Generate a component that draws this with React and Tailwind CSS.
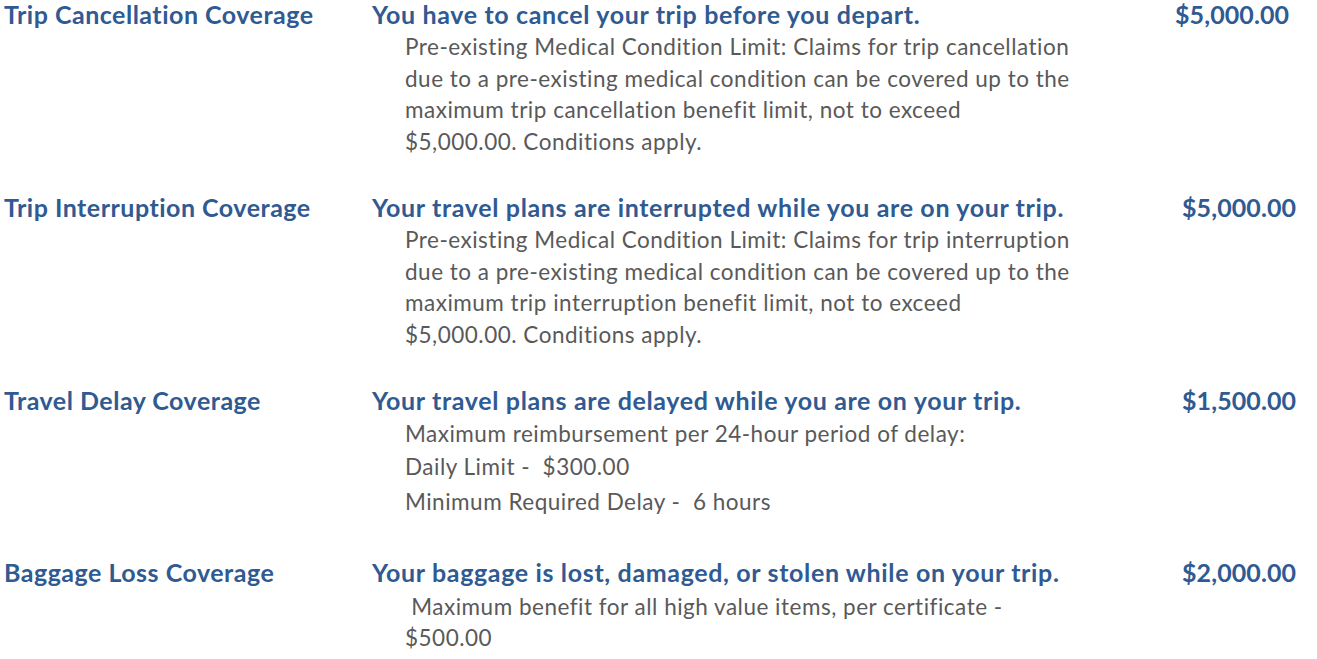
import React from "react";

const rows = [
  {
    title: "Trip Cancellation Coverage",
    lead: "You have to cancel your trip before you depart.",
    amount: "$5,000.00",
    amountPad: "pl-0",
    lines: [
      "Pre-existing Medical Condition Limit: Claims for trip cancellation",
      "due to a pre-existing medical condition can be covered up to the",
      "maximum trip cancellation benefit limit, not to exceed",
      "$5,000.00. Conditions apply.",
    ],
  },
  {
    title: "Trip Interruption Coverage",
    lead: "Your travel plans are interrupted while you are on your trip.",
    amount: "$5,000.00",
    amountPad: "pl-[7px]",
    lines: [
      "Pre-existing Medical Condition Limit: Claims for trip interruption",
      "due to a pre-existing medical condition can be covered up to the",
      "maximum trip interruption benefit limit, not to exceed",
      "$5,000.00. Conditions apply.",
    ],
  },
];

function Row({ title, lead, amount, amountPad, children }) {
  return (
    <div className="flex">
      <div className="w-[372px] shrink-0 pl-[4px] text-[25px] font-bold leading-[31px] tracking-[0.5px] text-[#2f5a92] whitespace-nowrap">
        {title}
      </div>
      <div className="w-[803px] shrink-0">
        <div className="text-[25px] font-bold leading-[31px] tracking-[0.65px] text-[#2f5a92] whitespace-nowrap">{lead}</div>
        {children}
      </div>
      <div className={`text-[25px] font-bold leading-[31px] tracking-[0.1px] text-[#2f5a92] ${amountPad}`}>{amount}</div>
    </div>
  );
}

export default function App() {
  return (
    <div className="min-h-screen bg-white font-['Lato','Liberation_Sans',sans-serif]">
      <div className="-mt-[1px] flex flex-col gap-[35px]">
        {rows.map((r, i) => (
          <Row key={i} {...r}>
            <div className="pl-[33px] pt-[1px] text-[22.5px] leading-[31.5px] tracking-[0.5px] text-[#595959]">
              {r.lines.map((l, j) => (
                <div key={j}>{l}</div>
              ))}
            </div>
          </Row>
        ))}
        <Row
          title="Travel Delay Coverage"
          lead="Your travel plans are delayed while you are on your trip."
          amount="$1,500.00"
          amountPad="pl-[7px]"
        >
          <div className="pl-[33px] text-[22.5px] tracking-[0.5px] text-[#595959]">
            <div className="mt-[2px] leading-[31px]">Maximum reimbursement per 24-hour period of delay:</div>
            <div className="mt-[2px] leading-[31px]">Daily Limit -&nbsp; $300.00</div>
            <div className="mt-[4px] leading-[31px]">Minimum Required Delay -&nbsp; 6 hours</div>
          </div>
        </Row>
        <div className="mt-[5px]">
          <Row
            title="Baggage Loss Coverage"
            lead="Your baggage is lost, damaged, or stolen while on your trip."
            amount="$2,000.00"
            amountPad="pl-[7px]"
          >
            <div className="pl-[33px] pt-[3px] text-[22.5px] leading-[31px] tracking-[0.5px] text-[#595959]">
              <div>&nbsp;Maximum benefit for all high value items, per certificate -</div>
              <div>$500.00</div>
            </div>
          </Row>
        </div>
      </div>
    </div>
  );
}
